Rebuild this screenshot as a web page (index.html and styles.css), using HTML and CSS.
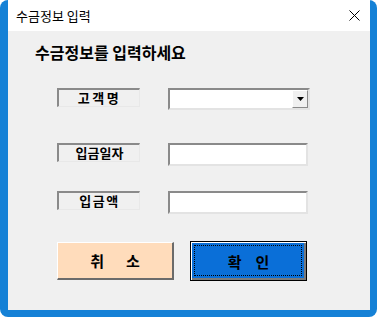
FILE: index.html
```html
<html>
	<head>
		<title>수금정보 입력</title>
		<link rel="stylesheet" href="styles.css">
	</head>
	<body>
		<div class="frame">
			<div class="window">
				<div class="titlebar">
					<span class="title">수금정보 입력</span>
					<svg class="close" width="11" height="11" viewBox="0 0 11 11">
						<path d="M0.5 0.5 L10.5 10.5 M10.5 0.5 L0.5 10.5" stroke="#000" stroke-width="1" fill="none"/>
					</svg>
				</div>
				<div class="content">
					<div class="heading">수금정보를 입력하세요</div>
					<div class="row row1">
						<div class="label wide">고객명</div>
						<div class="field combo">
							<div class="drop">
								<svg width="7" height="4" viewBox="0 0 7 4"><path d="M0 0 L7 0 L3.5 4 Z" fill="#000"/></svg>
							</div>
						</div>
					</div>
					<div class="row row2">
						<div class="label tight">입금일자</div>
						<div class="field"></div>
					</div>
					<div class="row row3">
						<div class="label">입금액</div>
						<div class="field"></div>
					</div>
					<div class="buttons">
						<div class="btn cancel"><span>취</span><span>소</span></div>
						<div class="btn ok"><span>확</span><span>인</span></div>
					</div>
				</div>
			</div>
		</div>
	</body>
</html>
```

FILE: styles.css
```css
body {
	margin: 0;
	background: #ffffff;
	font-family: "Noto Sans CJK KR", "Noto Sans", sans-serif;
	color: #000000;
}
.frame {
	width: 377px;
	height: 317px;
	box-sizing: border-box;
	padding: 0 7px 7px 8px;
	background: #1581d6;
	border-radius: 8px;
}
.window {
	display: flex;
	flex-direction: column;
	height: 100%;
}
.titlebar {
	height: 31px;
	background: #ffffff;
	display: flex;
	align-items: center;
	justify-content: space-between;
	padding: 0 10px 0 8px;
	font-size: 13px;
}
.title {
	line-height: 15px;
}
.content {
	flex: 1;
	background: #f0f0f0;
	padding-left: 49px;
}
.heading {
	font-size: 16px;
	font-weight: bold;
	line-height: 20px;
	margin-top: 11px;
	margin-left: -22px;
}
.row {
	display: flex;
	align-items: flex-start;
	gap: 28px;
}
.row1 { margin-top: 26px; }
.row2 { margin-top: 33px; }
.row3 { margin-top: 25px; }
.label {
	width: 83px;
	height: 19px;
	box-sizing: border-box;
	border: 1px solid;
	border-color: #8a8a8a #e8e8e8 #e8e8e8 #8a8a8a;
	border-left-width: 2px;
	border-top-width: 2px;
	padding-left: 1px;
	font-size: 13px;
	font-weight: bold;
	line-height: 15px;
	text-align: center;
	letter-spacing: 1.5px;
}
.label.wide {
	letter-spacing: 2.5px;
}
.label.tight {
	letter-spacing: 0;
}
.field {
	width: 140px;
	height: 23px;
	box-sizing: border-box;
	background: #ffffff;
	border: 2px solid;
	border-color: #8a8a8a #e3e3e3 #e3e3e3 #8a8a8a;
}
.combo {
	width: 142px;
	height: 22px;
	display: flex;
	justify-content: flex-end;
}
.drop {
	width: 16px;
	height: 18px;
	box-sizing: border-box;
	background: #f0f0f0;
	border: 1px solid;
	border-color: #ffffff #8a8a8a #8a8a8a #ffffff;
	display: flex;
	align-items: center;
	justify-content: center;
}
.buttons {
	display: flex;
	gap: 16px;
	margin-top: 27px;
	align-items: center;
}
.btn {
	width: 117px;
	box-sizing: border-box;
	display: flex;
	align-items: center;
	justify-content: center;
	font-size: 15px;
	font-weight: bold;
	position: relative;
}
.cancel {
	height: 38px;
	background: #ffdcbb;
	border: 1px solid;
	border-color: #ffffff #6b6b6b #6b6b6b #ffffff;
	border-right-width: 2px;
	border-bottom-width: 2px;
	gap: 22px;
}
.ok {
	height: 40px;
	background: #0a6fd8;
	border: 1px solid #000000;
	box-shadow: inset 1px 1px 0 #ffffff, inset -2px -2px 0 #7a7a7a;
	gap: 14px;
}
.ok::after {
	content: "";
	position: absolute;
	left: 3px;
	top: 3px;
	right: 4px;
	bottom: 4px;
	border: 1px dotted #000000;
}
```
